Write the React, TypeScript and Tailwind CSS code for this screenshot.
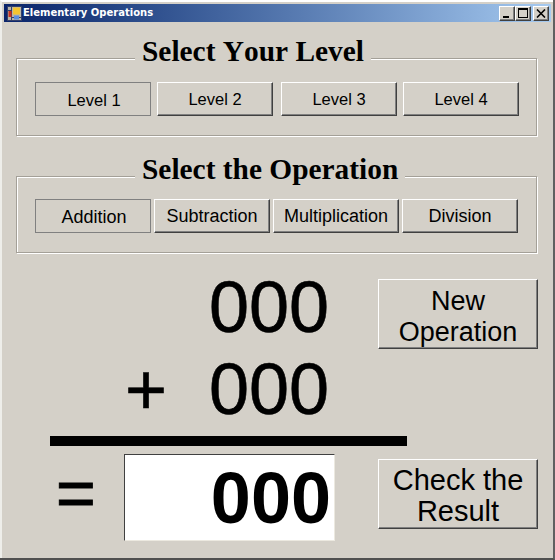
const raised =
  "bg-[#d4d0c8] border border-t-white border-l-white border-r-[#404040] border-b-[#404040] shadow-[inset_-1px_-1px_0_#808080] text-black";
const flat = "bg-[#d4d0c8] border border-[#808080] text-black";
const bigDigits = "text-[72px] leading-none [-webkit-text-stroke:0.6px_black]";

function Btn({
  label,
  width,
  size,
  down,
}: {
  label: string;
  width: string;
  size: string;
  down?: boolean;
}) {
  return (
    <button
      className={`${width} ${size} h-[34px] shrink-0 leading-none ${down ? flat + " pt-[2px] pl-[2px]" : raised}`}
    >
      {label}
    </button>
  );
}

function Group({
  title,
  height,
  children,
}: {
  title: string;
  height: string;
  children: React.ReactNode;
}) {
  return (
    <div
      className={`relative ml-[14px] w-[521px] ${height} border border-[#a4a098] shadow-[1px_1px_0_white,inset_1px_1px_0_white]`}
    >
      <div className="absolute top-[-26px] left-[118px] bg-[#d4d0c8] px-[7px] font-['Liberation_Serif',serif] text-[29.4px] font-bold leading-[36px] whitespace-nowrap [font-kerning:none]">
        {title}
      </div>
      {children}
    </div>
  );
}

function CaptionBtn({ children, className }: { children: React.ReactNode; className?: string }) {
  return (
    <div className={`flex h-[15px] w-[16px] items-center justify-center ${raised} ${className ?? ""}`}>
      {children}
    </div>
  );
}

export default function App() {
  return (
    <div className="relative h-[560px] w-[555px] overflow-hidden border-r-2 border-b-2 border-r-[#606060] border-b-[#505050] bg-[#d4d0c8] font-['Liberation_Sans',sans-serif]">
      <div className="flex h-full flex-col border-t-2 border-l-2 border-t-white border-l-[#eeeeea]">
        {/* Title bar */}
        <div className="mt-[2px] ml-[2px] flex h-[18px] w-[547px] items-center justify-between bg-gradient-to-r from-[#0a246a] to-[#a6caf0] pl-[3px] pr-[2px]">
          <div className="flex items-center gap-[1px]">
            <svg width="15" height="15" viewBox="0 0 15 15">
              <rect x="0.5" y="0.5" width="14" height="14" fill="#b8b4a8" stroke="#34406a" />
              <path d="M4.5 1 V14 M1 4.5 H4.5 M4.5 11.5 H14" stroke="#34406a" />
              <rect x="6" y="1.5" width="7" height="7" fill="#f4c430" />
              <rect x="1.5" y="5" width="3" height="6" fill="#c83020" />
              <rect x="7" y="9.5" width="5" height="4" fill="#5a8ee0" />
            </svg>
            <span className="font-['DejaVu_Sans',sans-serif] text-[10px] font-bold leading-none text-white">
              Elementary Operations
            </span>
          </div>
          <div className="flex items-center">
            <CaptionBtn>
              <span className="mt-[8px] mr-[3px] block h-[2px] w-[6px] bg-black" />
            </CaptionBtn>
            <CaptionBtn>
              <span className="block h-[10px] w-[10px] border border-t-2 border-black" />
            </CaptionBtn>
            <CaptionBtn className="ml-[2px]">
              <svg width="10" height="9" viewBox="0 0 10 9">
                <path d="M1 0.5 L9 8.5 M9 0.5 L1 8.5" stroke="black" strokeWidth="1.6" />
              </svg>
            </CaptionBtn>
          </div>
        </div>

        {/* Level */}
        <div className="mt-[36px]">
          <Group title="Select Your Level" height="h-[78px]">
            <div className="mt-[23px] ml-[18px] flex">
              <Btn label="Level 1" size="text-[16.5px]" width="w-[116px]" down />
              <Btn label="Level 2" size="text-[16.5px]" width="ml-[6px] w-[116px]" />
              <Btn label="Level 3" size="text-[16.5px]" width="ml-[8px] w-[116px]" />
              <Btn label="Level 4" size="text-[16.5px]" width="ml-[6px] w-[116px]" />
            </div>
          </Group>
        </div>

        {/* Operation */}
        <div className="mt-[40px]">
          <Group title="Select the Operation" height="h-[77px]">
            <div className="mt-[22px] ml-[18px] flex">
              <Btn label="Addition" size="text-[18px]" width="w-[116px]" down />
              <Btn label="Subtraction" size="text-[18px]" width="ml-[3px] w-[116px]" />
              <Btn label="Multiplication" size="text-[18px]" width="ml-[3px] w-[126px]" />
              <Btn label="Division" size="text-[18px]" width="ml-[3px] w-[116px]" />
            </div>
          </Group>
        </div>

        {/* Sum */}
        <div className="mt-[26px] flex">
          <div className="w-[362px]">
            <div className="flex h-[56px] items-center">
              <span className={`ml-[207px] ${bigDigits}`}>000</span>
            </div>
            <div className="mt-[14px] flex h-[80px] items-center">
              <span className={`ml-[123px] w-[84px] ${bigDigits}`}>+</span>
              <span className={bigDigits}>000</span>
            </div>
            <div className="mt-[7px] ml-[48px] h-[10px] w-[357px] bg-black" />
            <div className="mt-[8px] flex items-center">
              <span className="mb-[9px] ml-[54px] w-[68px] text-[68px] leading-none [-webkit-text-stroke:1px_black]">=</span>
              <div className="flex h-[87px] w-[211px] items-center justify-end border border-t-[#404040] border-l-[#404040] border-r-[#ece9e0] border-b-[#ece9e0] bg-white pr-[3px] text-[72px] font-bold leading-none text-black">
                000
              </div>
            </div>
          </div>
          <div className="ml-[14px] flex flex-col">
            <button className={`h-[70px] w-[160px] pt-[5px] text-[27px] leading-[31px] ${raised}`}>
              New
              <br />
              Operation
            </button>
            <button className={`mt-[110px] h-[70px] w-[160px] pt-[4px] text-[29px] leading-[31px] ${raised}`}>
              Check the
              <br />
              Result
            </button>
          </div>
        </div>
      </div>
      {/* resize handles */}
      <div className="absolute bottom-[-2px] left-[275px] h-[2px] w-[5px] bg-white" />
      <div className="absolute top-[277px] right-[-2px] h-[5px] w-[2px] bg-white" />
    </div>
  );
}
